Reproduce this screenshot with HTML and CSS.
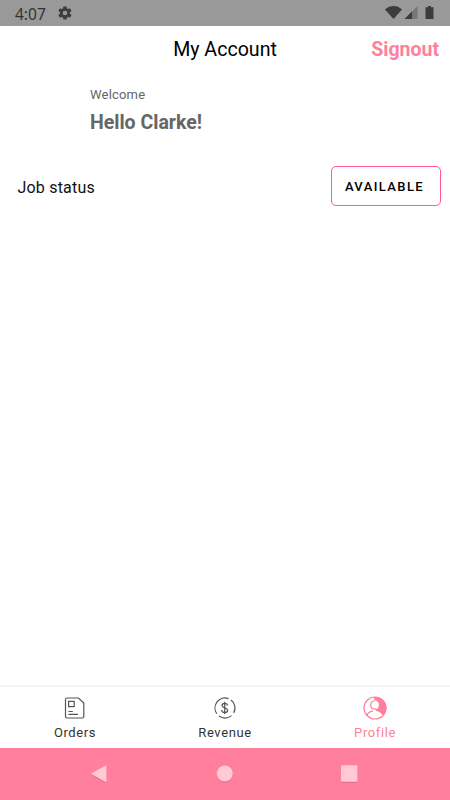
FILE: index.html
```html
<!DOCTYPE html>
<html lang="en">
<head>
  <meta charset="UTF-8">
  <meta name="viewport" content="width=device-width, initial-scale=1.0">
  <title>My Account</title>
  <link rel="stylesheet" href="styles.css">
</head>
<body>
  <div class="status-bar">
    <span class="clock">4:07</span>
    <svg class="gear" width="16" height="16" viewBox="0 0 24 24"><path d="M19.4 13a7.5 7.5 0 0 0 0-2l2.1-1.6a.5.5 0 0 0 .1-.6l-2-3.5a.5.5 0 0 0-.6-.2l-2.5 1a7.300 7.300 0 0 0-1.700-1l-.4-2.600a.5.5 0 0 0-.5-.4h-4a.5.5 0 0 0-.5.4L9 5.100a7.700 7.700 0 0 0-1.700 1l-2.500-1a.5.5 0 0 0-.6.2l-2 3.500a.5.5 0 0 0 .1.6L4.500 11a8 8 0 0 0 0 2l-2.200 1.600a.5.5 0 0 0-.1.6l2 3.500c.1.2.4.3.6.2l2.500-1a7.300 7.300 0 0 0 1.700 1l.4 2.600c0 .3.2.4.5.4h4c.3 0 .5-.2.5-.4l.4-2.600a7.700 7.700 0 0 0 1.700-1l2.500 1c.2.1.5 0 .6-.2l2-3.500a.5.5 0 0 0-.1-.6zM12 15.500a3.500 3.500 0 1 1 0-7 3.500 3.500 0 0 1 0 7z"/></svg>
    <svg class="signals" width="52" height="16" viewBox="0 0 52 16">
      <path d="M0 4.400C5-.2 12-.2 17 4.400L8.500 14z"/>
      <path class="faint" d="M32.500 1v13h-13z"/>
      <path d="M27 6.500V14h-7.500z"/>
      <path d="M43 1h3v1.300h2.500V14h-8V2.300H43z"/>
    </svg>
  </div>

  <header class="header">
    <h1>My Account</h1>
    <a class="signout">Signout</a>
  </header>

  <main class="content">
    <div class="welcome">
      <p>Welcome</p>
      <h2>Hello Clarke!</h2>
    </div>
    <div class="job-row">
      <span>Job status</span>
      <button class="status-btn">AVAILABLE</button>
    </div>
  </main>

  <nav class="tabs">
    <a class="tab">
      <svg width="24" height="24" viewBox="0 0 24 24">
        <path d="M4 2H15.500l5.300 5v13.500a1.500 1.500 0 0 1-1.500 1.500H4A1.500 1.500 0 0 1 2.500 20.500v-17A1.500 1.500 0 0 1 4 2z"/>
        <path d="M5.600 5.400h5.600v5.300H5.600zM5.400 15.500h4.400M5.400 18.400h9.600"/>
      </svg>
      <span>Orders</span>
    </a>
    <a class="tab">
      <svg width="24" height="24" viewBox="0 0 24 24">
        <path d="M3.800 17.700A10 10 0 0 1 15.500 2.600M18 4A10 10 0 0 1 20.700 16.900M18.500 19.600A10 10 0 0 1 6 20.100"/>
        <path d="M14.500 9.500c0-1.400-1-2.200-2.800-2.200s-2.700.8-2.700 2.200c0 3 5.600 1.700 5.600 4.700 0 1.500-1.100 2.300-2.900 2.300s-3-.9-3-2.500M11.700 5.800v12.200"/>
      </svg>
      <span>Revenue</span>
    </a>
    <a class="tab active">
      <svg width="24" height="24" viewBox="0 0 24 24">
        <circle cx="12" cy="12" r="11"/>
        <path class="fill" d="M11 1a11 11 0 0 1 8.500 19.200c-1.500-2.800-3.500-4.200-6.500-5l-.5-2c1.800-.7 2.700-2.300 2.700-4.300C15.200 6.600 13.600 5 11.500 5z"/>
        <path d="M11.500 5C9.300 5 7.700 6.700 7.700 9s1.600 4 3.800 4c1 0 1.800-.3 2.400-.9M3.800 19.500c1-2.500 2.900-3.800 6-4.300"/>
        <path class="light" d="M11.500 5c2.200 0 3.800 1.700 3.800 4 0 1.700-.8 3-2.100 3.700M12.500 15.500c3.200.2 5.600 1.800 6.500 4.600"/>
      </svg>
      <span>Profile</span>
    </a>
  </nav>

  <div class="nav-bar">
    <svg viewBox="0 0 20 20"><path d="M1.700 9.200 15.500 1.500q1-.5 1 .5v15.500q0 1-1 .5L1.700 10.300q-.9-.5 0-1.100z"/></svg>
    <svg viewBox="0 0 20 20"><circle cx="9.800" cy="9.500" r="8"/></svg>
    <svg viewBox="0 0 20 20"><rect x="1" y="1.300" width="16.400" height="16.500" rx="1"/></svg>
  </div>
</body>
</html>
```
FILE: styles.css
```css
* {
  box-sizing: border-box;
}
body {
  margin: 0;
  height: 100vh;
  display: flex;
  flex-direction: column;
  background: #fff;
  color: #111;
  font-family: Roboto, sans-serif;
}
h1, h2, p {
  margin: 0;
}
svg {
  display: block;
}
.status-bar {
  height: 26px;
  display: flex;
  align-items: center;
  padding: 0 13px 0 15px;
  background: #999;
  color: #333;
  fill: #3c3c3c;
}
.clock {
  font-family: "Noto Sans", sans-serif;
  font-size: 15.5px;
  line-height: 26px;
  padding-top: 1px;
  width: 42px;
}
.signals {
  margin-left: auto;
}
.signals .faint {
  fill: #777;
}
.header {
  height: 46px;
  display: grid;
  grid-template-columns: 1fr auto 1fr;
  align-items: center;
  padding: 0 11px;
}
.header h1 {
  grid-column: 2;
  font-size: 19.6px;
  font-weight: 400;
  color: #000;
}
.signout {
  justify-self: end;
  font-size: 19.5px;
  font-weight: 700;
  color: #ff7f9c;
}
.content {
  flex: 1;
}
.welcome {
  padding: 15px 0 0 90px;
  color: #666;
}
.welcome p {
  font-size: 13px;
  line-height: 16px;
  letter-spacing: 0.2px;
}
.welcome h2 {
  margin-top: 8px;
  font-size: 19.5px;
  line-height: 24px;
}
.job-row {
  margin-top: 31px;
  padding: 0 9px 0 17.5px;
  display: flex;
  align-items: center;
  justify-content: space-between;
  font-size: 16px;
  letter-spacing: 0.2px;
}
.job-row span {
  padding-top: 2px;
}
.status-btn {
  width: 110px;
  height: 40px;
  padding: 0 3px 0 0;
  border: 1px solid #ff5c88;
  border-radius: 5px;
  background: #fff;
  color: #000;
  font-family: inherit;
  font-size: 13px;
  font-weight: 500;
  letter-spacing: 1.4px;
}
.tabs {
  height: 63px;
  display: flex;
  border-top: 2px solid #f4f4f4;
}
.tab {
  flex: 1;
  display: flex;
  flex-direction: column;
  align-items: center;
  padding-top: 9px;
  font-size: 13px;
  line-height: 16px;
  letter-spacing: 0.6px;
  color: #333;
}
.tab svg {
  margin-bottom: 5px;
  fill: none;
  stroke: #555;
  stroke-width: 1.2;
}
.tab.active {
  color: #ff7f9c;
}
.tab.active svg {
  stroke: #ff7f9c;
}
.tab .fill {
  fill: #ff7f9c;
  stroke: none;
}
.tab .light {
  stroke: #fff;
}
.nav-bar {
  height: 52px;
  display: flex;
  align-items: center;
  justify-content: space-between;
  padding: 0 90px;
  background: #ff7f9c;
}
.nav-bar svg {
  width: 20px;
  height: 20px;
  fill: #ffcad6;
  filter: drop-shadow(0 1px 0 rgba(160, 60, 90, 0.3));
}
```
